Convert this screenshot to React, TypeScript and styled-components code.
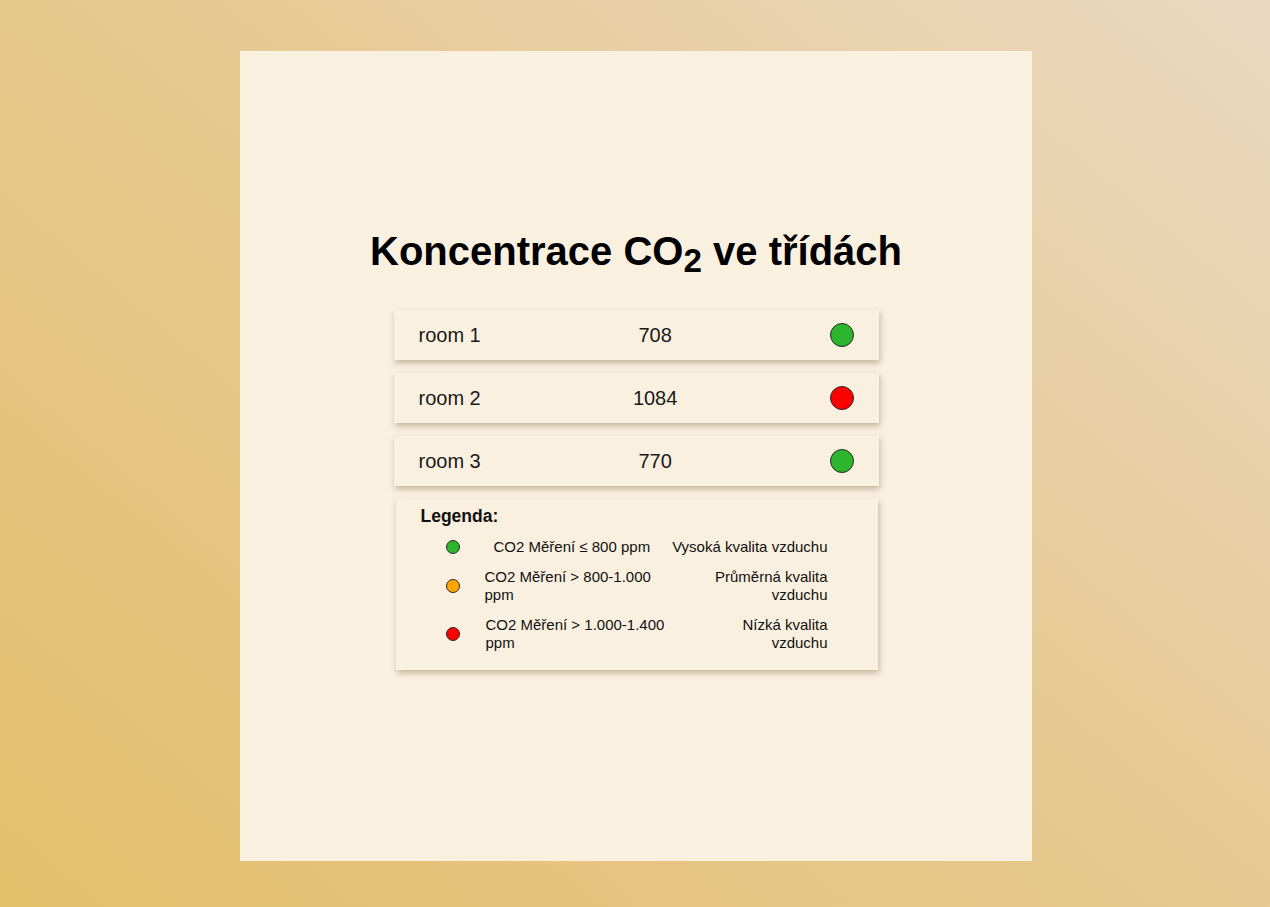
import React from "react";
import styled, { createGlobalStyle } from "styled-components";

const Global = createGlobalStyle`
  html, body { margin: 0; padding: 0; }
  body {
    font-family: "Liberation Sans", Arial, sans-serif;
    color: #111;
  }
`;

const Page = styled.div`
  width: 1270px;
  height: 907px;
  box-sizing: border-box;
  padding: 51px 238px 46px 240px;
  background: linear-gradient(40deg, #e3bf6b 0%, #e6c98f 50%, #ebd8c2 100%);
  display: flex;
`;

const Panel = styled.main`
  flex: 1;
  background: #faf0e0;
  display: flex;
  flex-direction: column;
  align-items: center;
  justify-content: center;
  padding-bottom: 14px;
`;

const Title = styled.h1`
  margin: 0 0 36px;
  font-size: 40px;
  font-weight: bold;
  line-height: 46px;
  color: #000;
  sub {
    font-size: 0.83em;
    line-height: 0;
    vertical-align: -0.22em;
  }
`;

const List = styled.div`
  display: flex;
  flex-direction: column;
  gap: 13px;
  width: 485px;
`;

const Row = styled.div`
  display: flex;
  align-items: center;
  justify-content: space-between;
  height: 50px;
  padding: 0 25px 0 25px;
  box-sizing: border-box;
  background: #faf0e0;
  box-shadow: 1px 3px 6px rgba(90, 70, 40, 0.35);
  font-size: 20px;
  color: #1a1a1a;
`;

const Dot = styled.span<{ $color: string; $size: number }>`
  display: inline-block;
  width: ${(p) => p.$size}px;
  height: ${(p) => p.$size}px;
  border-radius: 50%;
  box-sizing: border-box;
  border: 1px solid #2a2a2a;
  background: ${(p) => p.$color};
  flex: none;
`;

const Legend = styled.section`
  margin: 0 1px 0 2px;
  padding: 8px 25px 18px 25px;
  background: #faf0e0;
  box-shadow: 1px 3px 6px rgba(90, 70, 40, 0.35);
  font-size: 15px;
  line-height: 18px;
  color: #111;
`;

const LegendTitle = styled.div`
  font-weight: bold;
  font-size: 17.5px;
  line-height: 19px;
  margin-bottom: 12px;
`;

const LegendRows = styled.div`
  display: flex;
  flex-direction: column;
  gap: 12px;
  padding-right: 25px;
`;

const LegendRow = styled.div`
  display: flex;
  align-items: center;
`;

const DotCell = styled.div`
  flex: none;
  width: 64px;
  display: flex;
  justify-content: center;
`;

const Range = styled.div<{ $indent: number }>`
  flex: none;
  width: 186px;
  padding-left: ${(p) => p.$indent}px;
  box-sizing: border-box;
`;

const Quality = styled.div<{ $width: number }>`
  margin-left: auto;
  max-width: ${(p) => p.$width}px;
  text-align: right;
`;

const rooms = [
  { name: "room 1", value: 708, color: "#2db52d" },
  { name: "room 2", value: 1084, color: "#ff0000" },
  { name: "room 3", value: 770, color: "#2db52d" },
];

const legend = [
  { color: "#2db52d", range: "CO2 Měření ≤ 800 ppm", quality: "Vysoká kvalita vzduchu", indent: 9, width: 200 },
  { color: "#ffa500", range: "CO2 Měření > 800-1.000 ppm", quality: "Průměrná kvalita vzduchu", indent: 0, width: 130 },
  { color: "#ff0000", range: "CO2 Měření > 1.000-1.400 ppm", quality: "Nízká kvalita vzduchu", indent: 1, width: 110 },
];

export default function App() {
  return (
    <>
      <Global />
      <Page>
        <Panel>
          <Title>
            Koncentrace CO<sub>2</sub> ve třídách
          </Title>
          <List>
            {rooms.map((r) => (
              <Row key={r.name}>
                <span>{r.name}</span>
                <span>{r.value}</span>
                <Dot $color={r.color} $size={24} />
              </Row>
            ))}
            <Legend>
              <LegendTitle>Legenda:</LegendTitle>
              <LegendRows>
                {legend.map((l) => (
                  <LegendRow key={l.range}>
                    <DotCell>
                      <Dot $color={l.color} $size={14} />
                    </DotCell>
                    <Range $indent={l.indent}>{l.range}</Range>
                    <Quality $width={l.width}>{l.quality}</Quality>
                  </LegendRow>
                ))}
              </LegendRows>
            </Legend>
          </List>
        </Panel>
      </Page>
    </>
  );
}
